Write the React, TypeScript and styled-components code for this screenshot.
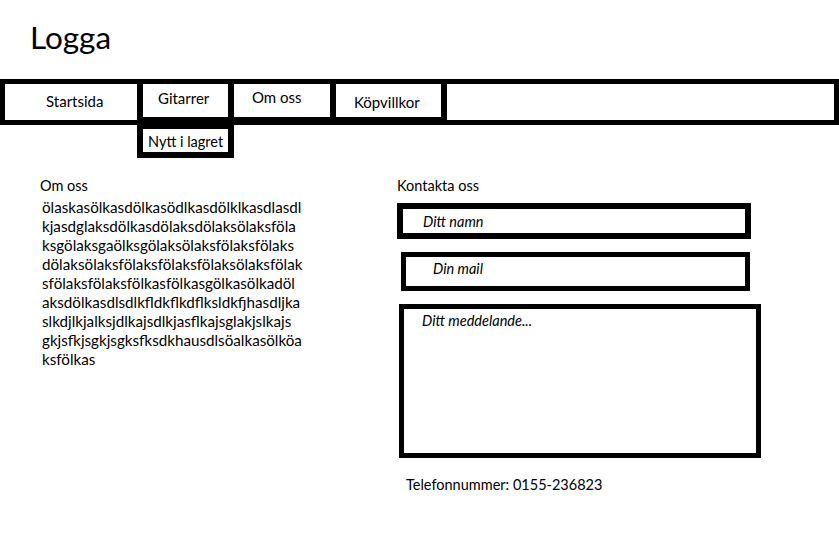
import styled, { createGlobalStyle } from "styled-components";

const GlobalStyle = createGlobalStyle`
  body {
    margin: 0;
    background: #fff;
    color: #000;
    font-family: Lato, "Liberation Sans", sans-serif;
  }
`;

const Header = styled.header`
  height: 79px;
  box-sizing: border-box;
  padding: 17px 0 0 30px;
`;

const Logo = styled.div`
  font-size: 31.5px;
  line-height: 40px;
`;

const Nav = styled.nav`
  position: relative;
  display: flex;
  height: 46px;
  box-sizing: border-box;
  border: 5px solid #000;
`;

const NavItem = styled.div<{ $width: number; $left: number; $top: number; $thick?: boolean }>`
  width: ${(p) => p.$width}px;
  flex: none;
  box-sizing: border-box;
  border-right: 6px solid #000;
  border-bottom: ${(p) => (p.$thick ? "3px solid #000" : "none")};
  padding: ${(p) => p.$top}px 0 0 ${(p) => p.$left}px;
  font-size: 15px;
  line-height: 19px;
`;

const NavFill = styled.div`
  flex: 1;
`;

const Dropdown = styled.div`
  position: absolute;
  left: 132px;
  top: 40px;
  width: 97px;
  height: 34px;
  box-sizing: border-box;
  border: 6px solid #000;
  border-top-width: 5px;
  background: #fff;
  padding: 3px 0 0 5px;
  font-size: 14.5px;
  line-height: 19px;
  white-space: nowrap;
`;

const Main = styled.main`
  display: grid;
  grid-template-columns: 397px 1fr;
  padding-top: 51px;
`;

const Column = styled.section<{ $pad: number }>`
  padding-left: ${(p) => p.$pad}px;
`;

const Heading = styled.div`
  font-size: 14.5px;
  line-height: 19px;
`;

const Paragraph = styled.div`
  margin-top: 3px;
  padding-left: 2px;
  font-size: 15.2px;
  line-height: 19px;
`;

const Line = styled.div`
  white-space: nowrap;
`;

const Field = styled.div<{
  $width: number;
  $height: number;
  $left: number;
  $top: number;
  $pad: number;
  $border: number;
  $raise?: number;
}>`
  width: ${(p) => p.$width}px;
  height: ${(p) => p.$height}px;
  margin: ${(p) => p.$top}px 0 0 ${(p) => p.$left}px;
  box-sizing: border-box;
  border: ${(p) => p.$border}px solid #000;
  padding-left: ${(p) => p.$pad}px;
  padding-bottom: ${(p) => p.$raise ?? 0}px;
  display: flex;
  align-items: center;
  font-size: 14.5px;
  font-style: italic;
`;

const MessageField = styled(Field)`
  align-items: flex-start;
  padding-top: 3px;
`;

const Phone = styled.div`
  margin: 17px 0 0 9px;
  font-size: 14.5px;
  line-height: 19px;
`;

const lines = [
  "ölaskasölkasdölkasödlkasdölklkasdlasdl",
  "kjasdglaksdölkasdölaksdölaksölaksföla",
  "ksgölaksgaölksgölaksölaksfölaksfölaks",
  "dölaksölaksfölaksfölaksfölaksölaksfölak",
  "sfölaksfölaksfölkasfölkasgölkasölkadöl",
  "aksdölkasdlsdlkfldkflkdflksldkfjhasdljka",
  "slkdjlkjalksjdlkajsdlkjasflkajsglakjslkajs",
  "gkjsfkjsgkjsgksfksdkhausdlsöalkasölköa",
  "ksfölkas",
];

export default function App() {
  return (
    <>
      <GlobalStyle />
      <Header>
        <Logo>Logga</Logo>
      </Header>
      <Nav>
        <NavItem $width={138} $left={41} $top={8}>
          Startsida
        </NavItem>
        <NavItem $width={91} $left={15} $top={5} $thick>
          Gitarrer
        </NavItem>
        <NavItem $width={102} $left={18} $top={4} $thick>
          Om oss
        </NavItem>
        <NavItem $width={111} $left={18} $top={9} $thick>
          Köpvillkor
        </NavItem>
        <NavFill />
        <Dropdown>Nytt i lagret</Dropdown>
      </Nav>
      <Main>
        <Column $pad={40}>
          <Heading>Om oss</Heading>
          <Paragraph>
            {lines.map((l) => (
              <Line key={l}>{l}</Line>
            ))}
          </Paragraph>
        </Column>
        <Column $pad={0}>
          <Heading>Kontakta oss</Heading>
          <Field $width={354} $height={36} $left={0} $top={8} $pad={20} $border={6}>
            Ditt namn
          </Field>
          <Field $width={349} $height={39} $left={4} $top={13} $pad={27} $border={5} $raise={6}>
            Din mail
          </Field>
          <MessageField $width={362} $height={154} $left={2} $top={13} $pad={18} $border={5}>
            Ditt meddelande...
          </MessageField>
          <Phone>Telefonnummer: 0155-236823</Phone>
        </Column>
      </Main>
    </>
  );
}
